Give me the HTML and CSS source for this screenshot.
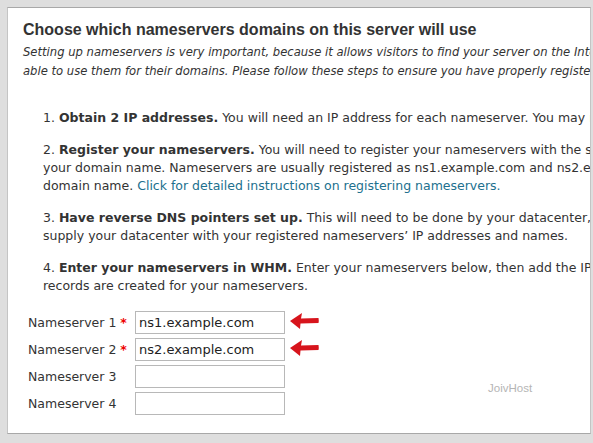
FILE: index.html
```html
<!DOCTYPE html>
<html lang="en">
<head>
    <meta charset="UTF-8">
    <meta name="viewport" content="width=device-width, initial-scale=1.0">
    <title>Nameservers</title>
    <link rel="stylesheet" href="styles.css">
</head>
<body>
    <div class="panel">
        <div class="panel-inner">
            <h1>Choose which nameservers domains on this server will use</h1>
            <p class="intro">Setting up nameservers is very important, because it allows visitors to find your server on the Internet. Your users will be<br>able to use them for their domains. Please follow these steps to ensure you have properly registered your nameservers.</p>

            <ol class="steps">
                <li>1. <b>Obtain 2 IP addresses.</b> You will need an IP address for each nameserver. You may need to contact your datacenter.</li>
                <li>2. <b>Register your nameservers.</b> You will need to register your nameservers with the service where you registered<br>your domain name. Nameservers are usually registered as ns1.example.com and ns2.example.com, where example.com is your<br>domain name. <a href="#">Click for detailed instructions on registering nameservers.</a></li>
                <li>3. <b>Have reverse DNS pointers set up.</b> This will need to be done by your datacenter, and you will need to<br>supply your datacenter with your registered nameservers’ IP addresses and names.</li>
                <li>4. <b>Enter your nameservers in WHM.</b> Enter your nameservers below, then add the IPs to ensure the A<br>records are created for your nameservers.</li>
            </ol>

            <div class="form">
                <div class="row">
                    <label>Nameserver 1 <span class="req">*</span></label>
                    <input type="text" value="ns1.example.com">
                    <svg class="arrow" width="30" height="18" viewBox="0 0 30 18"><path d="M29.5 6 L12 6.5 L13 1 L1 9 L11 17 L11.5 11.5 L29.5 11 Q30 8.5 29.5 6 Z" fill="#d7141c"/></svg>
                </div>
                <div class="row">
                    <label>Nameserver 2 <span class="req">*</span></label>
                    <input type="text" value="ns2.example.com">
                    <svg class="arrow" width="30" height="18" viewBox="0 0 30 18"><path d="M29.5 6 L12 6.5 L13 1 L1 9 L11 17 L11.5 11.5 L29.5 11 Q30 8.5 29.5 6 Z" fill="#d7141c"/></svg>
                </div>
                <div class="row">
                    <label>Nameserver 3</label>
                    <input type="text" value="">
                    <span class="brand">JoivHost</span>
                </div>
                <div class="row">
                    <label>Nameserver 4</label>
                    <input type="text" value="">
                </div>
            </div>
        </div>
    </div>
</body>
</html>
```

FILE: styles.css
```css
body {
    margin: 0;
    padding: 7px 2px 9px 7px;
    background: #dedede;
    font-family: 'DejaVu Sans', Verdana, sans-serif;
    color: #333;
}

.panel {
    background: #fff;
    border: 1px solid #c4c4c4;
    border-top-color: #a8a8a8;
    border-bottom-color: #a8a8a8;
    height: 427px;
    overflow: hidden;
    box-sizing: border-box;
}

.panel-inner {
    width: 1000px;
    padding: 12px 15px 0;
    white-space: nowrap;
}

h1 {
    font-family: 'Liberation Sans', Arial, sans-serif;
    font-size: 16px;
    font-weight: bold;
    color: #333;
    margin: 0 0 3px;
    line-height: 20px;
}

.intro {
    font-size: 11.6px;
    font-style: italic;
    line-height: 19px;
    margin: 0 0 28px;
}

.steps {
    list-style: none;
    margin: 0;
    padding: 0 0 0 20px;
    font-size: 12.5px;
    line-height: 18px;
}

.steps li {
    margin-bottom: 14px;
}

.steps a {
    color: #21708e;
    text-decoration: none;
}

.form {
    padding: 0 0 0 5px;
}

.row {
    display: flex;
    align-items: center;
    height: 27px;
    font-size: 12.5px;
}

.row label {
    width: 107px;
}

.req {
    color: #e00;
    font-weight: bold;
}

.row input {
    width: 150px;
    height: 23px;
    box-sizing: border-box;
    border: 1px solid #b8b8b8;
    padding: 0 3px;
    font-family: 'DejaVu Sans', Verdana, sans-serif;
    font-size: 13px;
    color: #222;
}

.arrow {
    margin-left: 4px;
    margin-top: -3px;
}

.brand {
    margin-left: 203px;
    margin-top: 22px;
    font-family: 'Liberation Sans', Arial, sans-serif;
    font-size: 11.5px;
    color: #b5b5b5;
}
```
